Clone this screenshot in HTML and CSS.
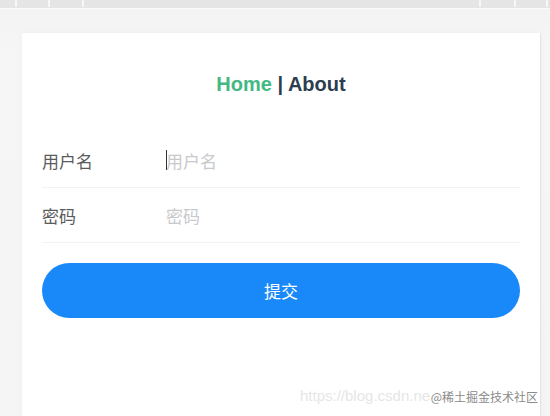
FILE: index.html
```html
<!DOCTYPE html>
<html lang="zh">
<head>
<meta charset="utf-8">
<title>Login</title>
<link rel="stylesheet" href="styles.css">
</head>
<body>
<div class="topbar">
  <span class="tick t1"></span><span class="tick t2"></span><span class="tick t3"></span>
  <span class="tick t4"></span><span class="tick t5"></span><span class="tick t6"></span>
</div>
<div class="page">
  <div class="card">
    <nav class="nav"><a class="home">Home</a> | <a class="about">About</a></nav>
    <form class="form">
      <div class="cell">
        <label class="label">用户名</label>
        <div class="field">
          <span class="caret"></span>
          <input class="input" type="text" placeholder="用户名">
        </div>
      </div>
      <div class="cell">
        <label class="label">密码</label>
        <div class="field">
          <input class="input" type="password" placeholder="密码">
        </div>
      </div>
      <div class="actions">
        <button class="submit" type="button">提交</button>
      </div>
    </form>
  </div>
  <div class="watermark">
    <span class="wm-url">https://blog.csdn.ne</span>
    <span class="wm-brand">@稀土掘金技术社区</span>
  </div>
</div>
</body>
</html>
```

FILE: styles.css
```css
* { box-sizing: border-box; }
html, body { margin: 0; padding: 0; }
body {
  width: 550px;
  height: 416px;
  overflow: hidden;
  background: #f5f5f5;
  font-family: "Liberation Sans", Arial, "Noto Sans CJK SC", sans-serif;
}
.topbar {
  position: relative;
  height: 9px;
  background: #e5e5e5;
  border-bottom: 1px solid #fafafa;
}
.tick {
  position: absolute;
  top: 0;
  width: 2px;
  height: 7px;
  background: #f7f7f7;
}
.t1 { left: 15px; }
.t2 { left: 48px; }
.t3 { left: 82px; }
.t4 { left: 479px; }
.t5 { left: 514px; }
.t6 { left: 546px; }
.page {
  position: relative;
  padding: 24px 9px 0 22px;
  background: linear-gradient(#f3f3f3, #f6f6f6 40px, #f5f5f5);
  height: 407px;
  overflow: hidden;
}
.card {
  width: 519px;
  height: 400px;
  background: #fff;
  border-right: 1px solid #e3e3e3;
  box-shadow: 0 0 8px rgba(0,0,0,0.03);
  padding-top: 39px;
}
.nav {
  text-align: center;
  font-weight: bold;
  font-size: 20px;
  line-height: 24px;
  color: #2c3e50;
  margin-bottom: 37px;
}
.home { color: #42b983; }
.about { color: #2c3e50; }
.form { padding: 0 20px 0 20px; }
.cell {
  display: flex;
  align-items: center;
  height: 55px;
  border-bottom: 1px solid #f1f2f4;
}
.label {
  width: 124px;
  flex: none;
  font-family: "Noto Sans CJK SC", sans-serif;
  font-size: 17px;
  color: #5a5b5d;
}
.field {
  position: relative;
  flex: 1;
  display: flex;
  align-items: center;
}
.input {
  width: 100%;
  border: 0;
  outline: 0;
  padding: 0;
  margin: 0;
  font-family: "Noto Sans CJK SC", sans-serif;
  font-size: 17px;
  color: #323233;
  background: transparent;
}
.input::placeholder { color: #c8c9cc; }
.caret {
  position: absolute;
  left: 0;
  top: 50%;
  margin-top: -10px;
  width: 1px;
  height: 20px;
  background: #333;
}
.actions { padding-top: 20px; }
.submit {
  display: block;
  width: 100%;
  height: 55px;
  border: 0;
  border-radius: 28px;
  background: #1989fa;
  color: #fff;
  font-family: "Noto Sans CJK SC", sans-serif;
  font-size: 17px;
}
.watermark {
  position: absolute;
  left: 300px;
  top: 377px;
  width: 240px;
  height: 22px;
}
.wm-url {
  position: absolute;
  left: 0;
  top: 1px;
  font-size: 15px;
  color: #e6e6e6;
}
.wm-brand {
  position: absolute;
  right: 2px;
  top: 2px;
  font-family: "Noto Sans CJK SC", sans-serif;
  font-size: 12px;
  color: #8a8a8a;
  text-shadow: 0 0 2px #fff, 0 0 2px #fff;
}
```
